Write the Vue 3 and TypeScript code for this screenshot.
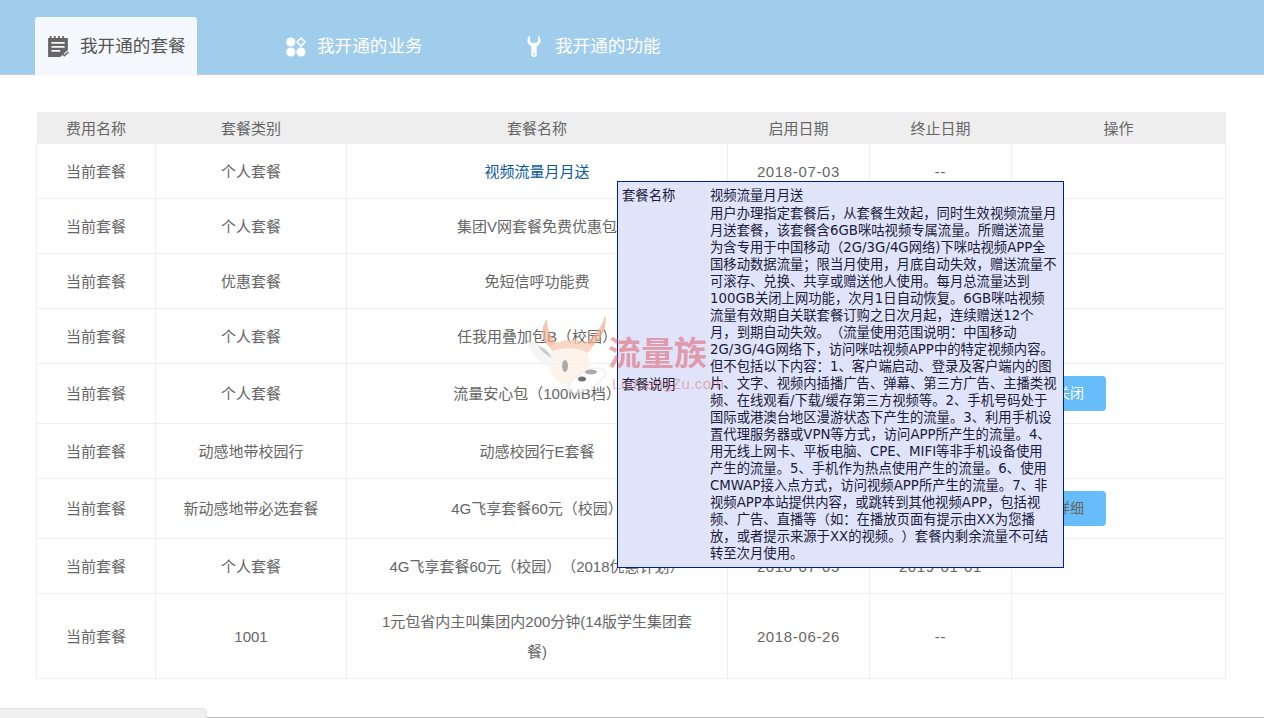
<template>
  <div class="Page">
    <div class="TabBar">
      <div v-for="(Tab, Index) in Tabs" :key="Tab" class="Tab" :class="{ Active: Index === 0 }">
        <svg v-if="Index === 0" class="TabIcon First" viewBox="0 0 20 22" preserveAspectRatio="none">
          <path fill="#666" d="M1 3h1.500V1h1.600v2h2.200V1h1.600v2h2.200V1h1.600v2h2.200V1h1.600v2H19v12.500L13.500 22H1z" />
          <path fill="#f4f7fb" d="M4 7h12v1.700H4zM4 11h12v1.700H4zM4 15h8v1.700H4z" />
          <path fill="#f4f7fb" d="M12 22l7-7v3l-4 4z" />
          <path fill="none" stroke="#666" stroke-width="1.400" d="M14 19l1.700 1.700L19.500 17" />
        </svg>
        <svg v-else-if="Index === 1" class="TabIcon Second" viewBox="0 0 20 20">
          <circle cx="4.800" cy="5" r="4.600" fill="#fff" />
          <circle cx="4.800" cy="15" r="4.600" fill="#fff" />
          <circle cx="15" cy="15" r="4.600" fill="#fff" />
          <path fill="none" stroke="#fff" stroke-width="1.600" d="M15 1l4 4-4 4-4-4z" />
        </svg>
        <svg v-else class="TabIcon Third" viewBox="0 0 16 22" preserveAspectRatio="none">
          <path fill="#fff" d="M3.500 0.500C1.500 1.500 0.500 3.500 0.500 5.500c0 2.500 1.500 4.500 4.500 5.800V20c0 1.200 1.200 2 3 2s3-.8 3-2v-8.700c3-1.300 4.500-3.300 4.500-5.800 0-2-1-4-3-5v5.500C12.500 7.200 10.500 8 8 8S3.500 7.200 3.500 6z" />
          <circle cx="8" cy="19" r="1" fill="#a0cdec" />
        </svg>
        <span>{{ Tab }}</span>
      </div>
    </div>

    <div class="Content">
      <table class="FeeTable">
        <colgroup>
          <col v-for="Width in ColumnWidths" :key="Width.Id" :style="{ width: Width.Value + 'px' }" />
        </colgroup>
        <thead>
          <tr>
            <th v-for="Title in Headers" :key="Title">{{ Title }}</th>
          </tr>
        </thead>
        <tbody>
          <tr v-for="(Row, Index) in Rows" :key="Index" :class="{ HasAction: Row.Action }">
            <td>{{ Row.Fee }}</td>
            <td>{{ Row.Type }}</td>
            <td class="Name" :class="{ Link: Index === 0 }">{{ Row.Name }}</td>
            <td class="Date">{{ Row.Start }}</td>
            <td class="Date">{{ Row.End }}</td>
            <td class="Action">
              <a v-if="Row.Action" class="ActionButton" :class="Row.Action.Class">{{ Row.Action.Text }}</a>
            </td>
          </tr>
        </tbody>
      </table>
    </div>

    <div class="Tooltip">
      <div class="TipTable">
        <div class="TipRow">
          <div class="TipLabel">套餐名称</div>
          <div class="TipValue">视频流量月月送</div>
        </div>
        <div class="TipRow Grow">
          <div class="TipLabel Center">套餐说明</div>
          <div class="TipValue">
            <div v-for="Line in TipLines" :key="Line" class="TipLine">{{ Line }}</div>
          </div>
        </div>
      </div>
    </div>

    <div class="Watermark">
      <svg class="Deer" viewBox="0 0 84 80">
        <path fill="#f0b093" d="M21 5c-8 11-6 23 6 30l6-5c-8-5-12-14-12-25z" />
        <path fill="#f0b093" d="M79 1c3 12-3 25-16 34l-6-5c11-7 19-16 22-29z" />
        <path fill="#f6c8ad" d="M24 34c5-9 33-12 42-1-3 8-12 10-20 8-9 3-18 1-22-7z" />
        <path fill="#fbeee2" d="M25 38c9-5 28-5 36 1 5 8 3 19-6 25-9 9-21 8-27-1-6-8-8-18-3-25z" />
        <path fill="#f2f2f2" d="M1 27c11 1 21 7 28 16l-3 11C14 50 5 40 1 27z" />
        <path fill="#888" d="M12 32c6 2 11 6 14 12-6-3-11-7-14-12z" opacity=".6" />
        <path fill="#fff" stroke="#dcdcdc" d="M42 74c2-8 18-20 30-20 8 0 9 5 6 9-6 9-22 17-30 16-5-1-7-2-6-5z" />
        <ellipse cx="39" cy="52" rx="3" ry="6" fill="#8a8a8a" />
        <ellipse cx="65" cy="58" rx="6" ry="2.500" fill="#888" />
        <ellipse cx="56" cy="65" rx="4" ry="2.500" fill="#333" />
      </svg>
      <div class="MarkText">
        <div class="MarkTitle">流量族</div>
        <div class="MarkUrl">LiuLiangZu.com</div>
      </div>
    </div>

    <div class="BottomBar">
      <div class="BottomTab"></div>
    </div>
  </div>
</template>

<script setup lang="ts">
interface RowAction {
  Text: string
  Class: string
}

interface FeeRow {
  Fee: string
  Type: string
  Name: string
  Start: string
  End: string
  Action?: RowAction
}

const Tabs: string[] = ["我开通的套餐", "我开通的业务", "我开通的功能"]
const Headers: string[] = ["费用名称", "套餐类别", "套餐名称", "启用日期", "终止日期", "操作"]
const ColumnWidths = [119, 191, 381, 142, 142, 214].map((Value: number, Id: number) => ({ Id, Value }))

const Rows: FeeRow[] = [
  { Fee: "当前套餐", Type: "个人套餐", Name: "视频流量月月送", Start: "2018-07-03", End: "--" },
  { Fee: "当前套餐", Type: "个人套餐", Name: "集团V网套餐免费优惠包", Start: "", End: "" },
  { Fee: "当前套餐", Type: "优惠套餐", Name: "免短信呼功能费", Start: "", End: "" },
  { Fee: "当前套餐", Type: "个人套餐", Name: "任我用叠加包B（校园）", Start: "", End: "" },
  { Fee: "当前套餐", Type: "个人套餐", Name: "流量安心包（100MB档）", Start: "", End: "", Action: { Text: "关闭", Class: "White" } },
  { Fee: "当前套餐", Type: "动感地带校园行", Name: "动感校园行E套餐", Start: "", End: "" },
  { Fee: "当前套餐", Type: "新动感地带必选套餐", Name: "4G飞享套餐60元（校园）", Start: "", End: "", Action: { Text: "详细", Class: "Gray" } },
  { Fee: "当前套餐", Type: "个人套餐", Name: "4G飞享套餐60元（校园）（2018优惠计划）", Start: "2018-07-05", End: "2019-01-01" },
  { Fee: "当前套餐", Type: "1001", Name: "1元包省内主叫集团内200分钟(14版学生集团套餐)", Start: "2018-06-26", End: "--" }
]

const TipLines: string[] = [
  "用户办理指定套餐后，从套餐生效起，同时生效视频流量月",
  "月送套餐，该套餐含6GB咪咕视频专属流量。所赠送流量",
  "为含专用于中国移动（2G/3G/4G网络)下咪咕视频APP全",
  "国移动数据流量；限当月使用，月底自动失效，赠送流量不",
  "可滚存、兑换、共享或赠送他人使用。每月总流量达到",
  "100GB关闭上网功能，次月1日自动恢复。6GB咪咕视频",
  "流量有效期自关联套餐订购之日次月起，连续赠送12个",
  "月，到期自动失效。（流量使用范围说明：中国移动",
  "2G/3G/4G网络下，访问咪咕视频APP中的特定视频内容。",
  "但不包括以下内容：1、客户端启动、登录及客户端内的图",
  "片、文字、视频内插播广告、弹幕、第三方广告、主播类视",
  "频、在线观看/下载/缓存第三方视频等。2、手机号码处于",
  "国际或港澳台地区漫游状态下产生的流量。3、利用手机设",
  "置代理服务器或VPN等方式，访问APP所产生的流量。4、",
  "用无线上网卡、平板电脑、CPE、MIFI等非手机设备使用",
  "产生的流量。5、手机作为热点使用产生的流量。6、使用",
  "CMWAP接入点方式，访问视频APP所产生的流量。7、非",
  "视频APP本站提供内容，或跳转到其他视频APP，包括视",
  "频、广告、直播等（如：在播放页面有提示由XX为您播",
  "放，或者提示来源于XX的视频。）套餐内剩余流量不可结",
  "转至次月使用。"
]
</script>

<style scoped>
.Page {
  position: relative;
  width: 1264px;
  height: 718px;
  overflow: hidden;
  background-color: #fff;
  font-family: "Liberation Sans", "Noto Sans CJK SC", sans-serif;
  color: #666;
  text-spacing-trim: space-all;
}

.TabBar {
  box-sizing: border-box;
  height: 75px;
  padding: 17px 0 0 35px;
  display: flex;
  gap: 76px;
  background-color: #a0cdec;
  border-bottom: 1px solid #c8c8c8;
}

.Tab {
  position: relative;
  width: 162px;
  height: 58px;
  box-sizing: border-box;
  padding: 0 0 4px 44px;
  display: flex;
  align-items: center;
  font-size: 17.6px;
  color: #fff;
  border-radius: 3px 3px 0 0;
}

.Tab.Active {
  padding-left: 45px;
  background-color: #f4f7fb;
  color: #555;
}

.TabIcon {
  position: absolute;
  top: 18px;
}

.TabIcon.First {
  left: 12px;
  width: 22px;
  height: 22px;
}

.TabIcon.Second {
  left: 13px;
  top: 20px;
  width: 20px;
  height: 20px;
}

.TabIcon.Third {
  left: 16px;
  width: 14px;
  height: 22px;
}

.Content {
  padding: 37px 38px 0 36px;
}

.FeeTable {
  width: 1189px;
  table-layout: fixed;
  border-collapse: collapse;
  font-size: 15px;
  text-align: center;
}

.FeeTable th {
  height: 31px;
  padding: 0;
  font-weight: normal;
  background-color: #eee;
}

.FeeTable td {
  padding: 13px 10px 11px;
  line-height: 30px;
  border: 1px solid #eee;
}

.FeeTable td.Name {
  padding: 13px 30px 11px;
}

.FeeTable .HasAction td {
  padding-top: 12px;
  padding-bottom: 12px;
}

.FeeTable td.Link {
  color: #0a5a9c;
}

.FeeTable td.Date {
  letter-spacing: 0.65px;
}

.FeeTable td.Action {
  padding: 12px 0 12px 22px;
  text-align: left;
}

.ActionButton {
  display: block;
  width: 72px;
  height: 35px;
  font-size: 14px;
  line-height: 35px;
  text-align: center;
  border-radius: 4px;
  background-color: #66bdf9;
}

.ActionButton.White {
  color: #fff;
}

.ActionButton.Gray {
  color: #666;
}

.Tooltip {
  position: absolute;
  left: 617px;
  top: 181px;
  box-sizing: border-box;
  width: 447px;
  height: 387px;
  padding: 4px 4px 4px 3px;
  background-color: #e0e4fb;
  border: 1px solid #00208b;
  font-family: "DejaVu Sans", "Noto Sans CJK SC", sans-serif;
  font-size: 13.33px;
  line-height: 17px;
  color: #1a1a3a;
}

.TipTable {
  box-sizing: border-box;
  height: 100%;
  display: flex;
  flex-direction: column;
  border: 1px solid #e9e8ee;
}

.TipRow {
  display: flex;
}

.TipRow + .TipRow {
  border-top: 1px solid #e9e8ee;
}

.TipRow.Grow {
  flex: 1;
}

.TipLabel {
  width: 87px;
  flex-shrink: 0;
}

.TipLabel.Center {
  padding-top: 2px;
  display: flex;
  align-items: center;
}

.TipValue {
  flex: 1;
  border-left: 1px solid #eceae4;
  white-space: nowrap;
}

.Watermark {
  position: absolute;
  left: 526px;
  top: 314px;
  display: flex;
  pointer-events: none;
}

.Deer {
  width: 84px;
  height: 80px;
  opacity: 0.7;
}

.MarkText {
  margin-left: -2px;
  padding-top: 18px;
}

.MarkTitle {
  font-family: "Liberation Serif", "Noto Sans CJK SC", serif;
  font-size: 33px;
  line-height: 44px;
  font-weight: bold;
  color: rgba(226, 80, 90, 0.52);
}

.MarkUrl {
  padding-left: 4px;
  font-size: 15px;
  line-height: 15px;
  letter-spacing: 0.4px;
  color: rgba(226, 80, 90, 0.42);
}

.BottomBar {
  position: absolute;
  left: 0;
  right: 0;
  bottom: 0;
  height: 10px;
  border-bottom: 1px solid #bbb;
  box-sizing: border-box;
}

.BottomTab {
  box-sizing: border-box;
  width: 207px;
  height: 11px;
  background-color: #f0f0f0;
  border: 1px solid #e2e2e2;
  border-bottom: none;
  border-left: none;
  border-radius: 0 5px 0 0;
}
</style>
